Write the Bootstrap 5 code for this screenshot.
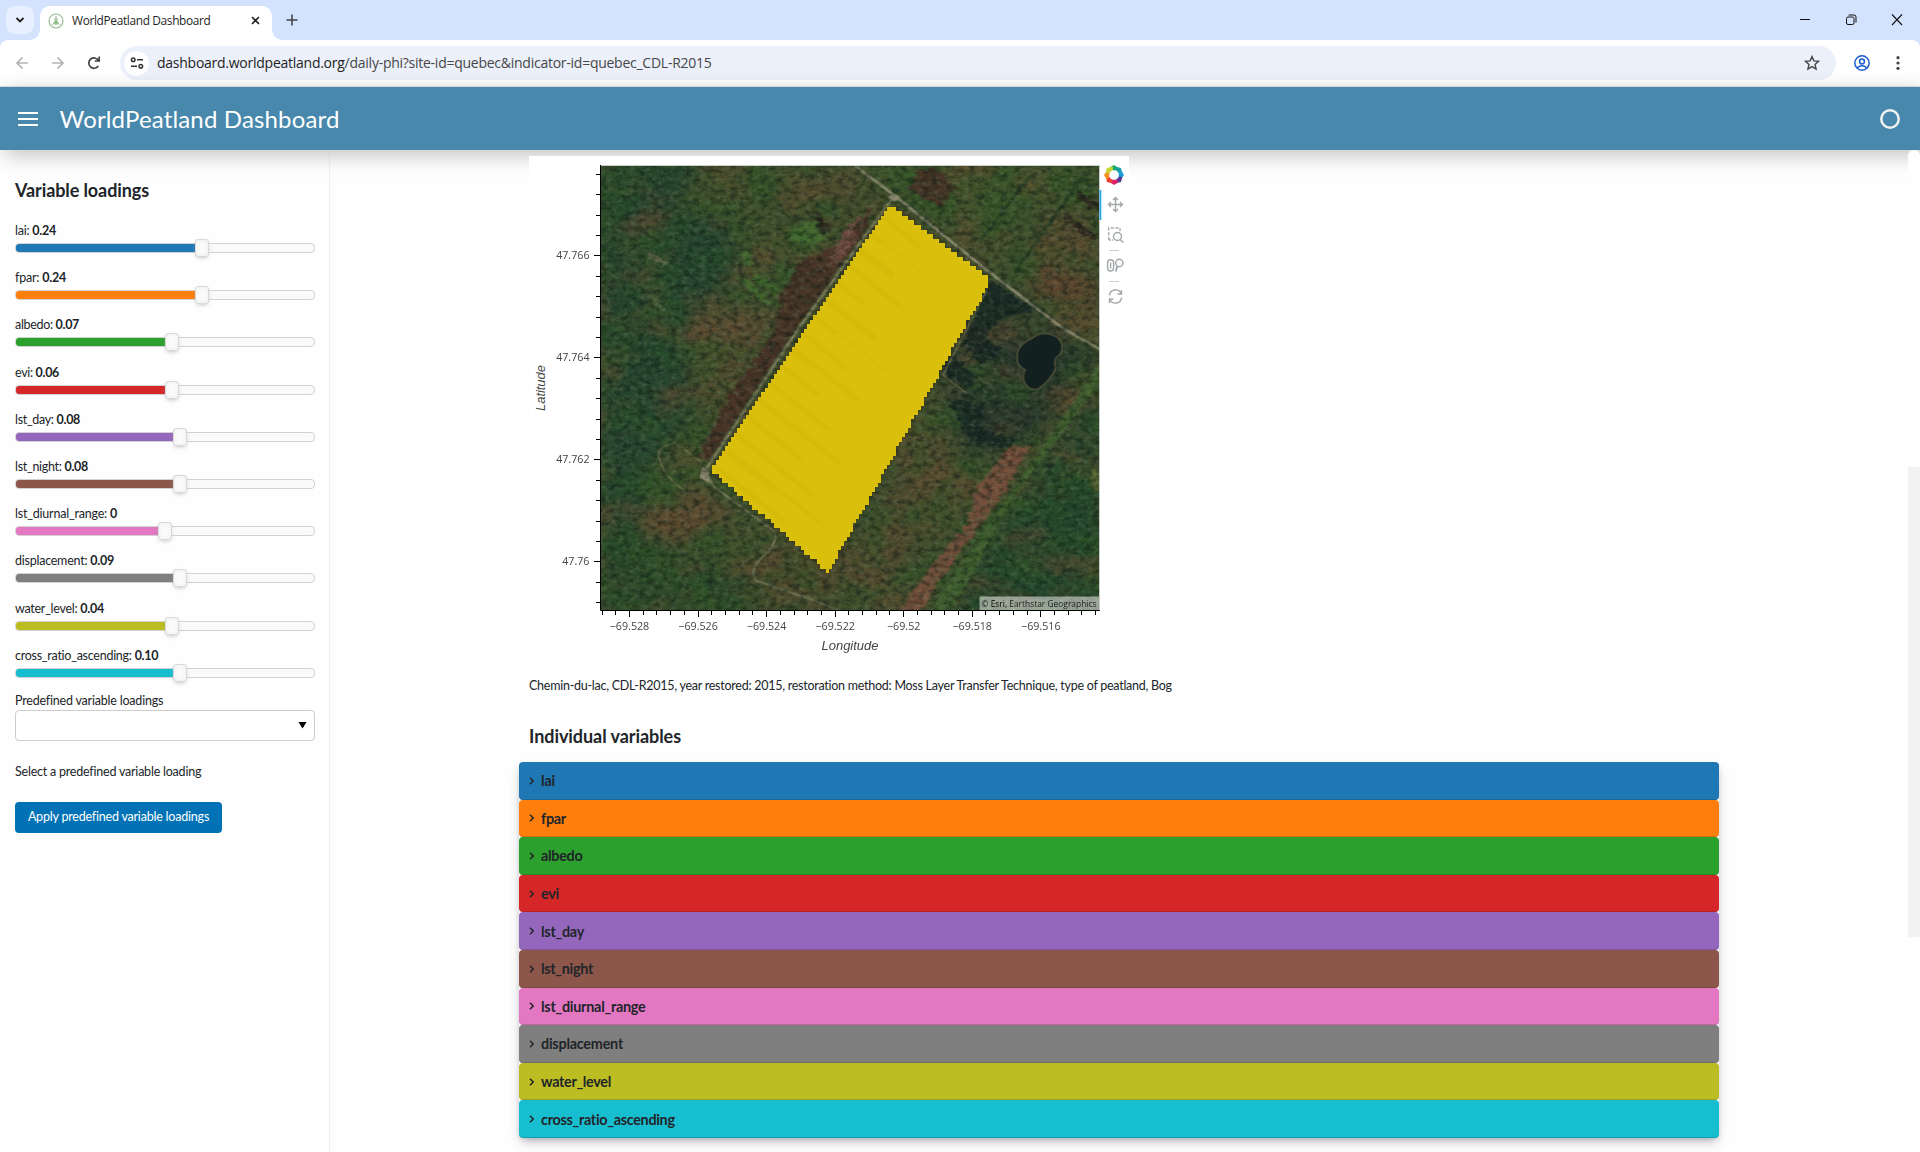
<!DOCTYPE html>
<html lang="en">
<head>
<meta charset="utf-8">
<title>WorldPeatland Dashboard</title>
<link href="https://cdn.jsdelivr.net/npm/bootstrap@5.3.0/dist/css/bootstrap.min.css" rel="stylesheet">
<style>
body{height:1152px;overflow:hidden;font-family:Lato,"Liberation Sans",sans-serif;font-size:12.5px;line-height:1.2;color:#212529;background:#fefefe}
.ui{font-family:"Open Sans","Noto Sans",sans-serif}
.tabstrip{height:40px;background:#d3e3fd}
.tabmenu{width:28px;height:28px;border-radius:9px;background:#e9f0fd;margin:6px 6px 0}
.tab{width:232px;height:34px;margin-top:6px;border-radius:10px 10px 0 0;background:#fff;padding:0 12px 5px 8px;font-size:11.9px;color:#1f1f1f;position:relative}
.tab::before,.tab::after{content:"";position:absolute;bottom:0;width:10px;height:10px}
.tab::before{left:-10px;background:radial-gradient(circle at 0 0,transparent 9.5px,#fff 10px)}
.tab::after{right:-10px;background:radial-gradient(circle at 100% 0,transparent 9.5px,#fff 10px)}
.toolbar{height:47px;background:#fff;border-bottom:1px solid #dcdfe3;padding:0 20px 0 15px}
.toolwrap{background:#d3e3fd}
.toolwrap .toolbar{border-radius:8px 8px 0 0}
.urlbar{height:34px;border-radius:17px;background:#ebf0fa;font-size:14px;color:#474747;padding:0 16px 0 4px;margin-left:15px}
.siteinfo{width:25px;height:25px;border-radius:13px;background:#fff;margin-right:8px}
.apphead{height:63px;background:#4888ac;color:#fff;padding:0 20px 0 18px;box-shadow:5px 5px 20px silver;font-size:24px;position:relative;z-index:1}
.side{width:330px;border-right:1px solid #efefef;padding:0 14px 0 15px;background:#fefefe}
.sidehead{font-size:18px;font-weight:700;height:68px;padding-top:30px;margin:0}
.loading{height:47.2px}
.loading .lbl{height:25px;padding-top:5px}
.track{width:300px;height:10px;border:1px solid #d2d2d2;border-radius:4px;background:#fafafa}
.fillbar{height:8px;border-radius:3px 0 0 3px;background:var(--c)}
.knob{width:14px;height:18px;margin:-5px 0 0 -7px;background:#fafafa;border:1px solid #d9d9d9;border-radius:3px;box-shadow:inset 0 0 4px #eee,0 2px 5px -2px #aaa;flex:none}
.pick{height:31px;width:300px;border:1px solid #ccc;border-radius:4px;background:#fff;padding-right:7px}
.applybtn{width:207px;height:31px;background:#0072b5;color:#fff;font-size:12.5px;border-radius:4px;padding:0;margin-top:22px}
.page{width:1200px;padding-top:6px;position:relative;z-index:2}
.note{height:42px}
.secthead{font-size:18px;font-weight:700;height:56px;padding-top:20px;margin:0}
.vars{box-shadow:rgba(50,50,93,.25) 0 6px 12px -2px,rgba(0,0,0,.3) 0 3px 7px -3px;border-radius:4px}
.varcard{height:37.6px;background:var(--c);border-bottom:1px solid rgba(0,0,0,.15);border-radius:4px;padding:1px 0 0 10px;font-size:14.4px;font-weight:700}
.scroller{width:12px;background:#fefefe;position:relative;z-index:2;border-radius:6px 6px 0 0;padding-top:317px}
.scroller div{height:470px;background:#f2f2f2}
svg{display:block;flex:none}
svg text{font-family:"Open Sans","Noto Sans",sans-serif}
svg text.axisname{font:italic 13px "Liberation Sans",sans-serif}
filter{color-interpolation-filters:sRGB}
</style>
<script src="https://cdn.jsdelivr.net/npm/bootstrap@5.3.0/dist/js/bootstrap.bundle.min.js"></script>
</head>
<body class="d-flex flex-column">
<div class="tabstrip ui d-flex flex-none">
  <div class="tabmenu d-flex align-items-center justify-content-center"><svg width="10" height="8" fill="none" stroke="#1f1f1f" stroke-width="1.8"><path d="M1.5 2l3.500 3.500L8.500 2"/></svg></div>
  <div class="tab d-flex align-items-center">
    <svg width="16" height="16" fill="none" stroke="#8fb98a"><circle cx="8" cy="8" r="7" stroke-width="1.100"/><path d="M8 3v9M6.500 5l3 6M9.500 5l-3 6M4.500 12l2.500-4 1 4 1-4 2.500 4" stroke-width="1"/></svg>
    <span id="tabname" class="text-nowrap" style="margin-left:8px">WorldPeatland Dashboard</span>
    <svg class="ms-auto" width="9" height="9" stroke="#1f1f1f" stroke-width="1.600"><path d="M1 1l7 7M8 1l-7 7"/></svg>
  </div>
  <svg style="margin:14px 0 0 14px" width="12" height="12" stroke="#444" stroke-width="1.600"><path d="M6 .5v11M.5 6h11"/></svg>
  <svg class="ms-auto" style="margin:14px 16px 0 0" width="104" height="12" fill="none" stroke="#111"><path d="M0 5.500h10M92 .5l10 10.500M102 .5l-10 10.500" stroke-width="1.100"/><rect x="46.500" y="3" width="7.500" height="7.500" rx="1.500"/><path d="M48.500 1h5.500q2 0 2 2v5.500"/></svg>
</div>
<div class="toolwrap ui"><div class="toolbar d-flex align-items-center">
  <svg width="90" height="16" fill="none" stroke-width="1.700"><g stroke="#b4b4b4"><path d="M13 8H2M7.500 2.500L2 8l5.500 5.500M37 8h11M42.500 2.500L48 8l-5.500 5.500"/></g><path stroke="#444" d="M83.300 11A5.200 5.200 0 1 1 83.500 5.500M84.200 1.500v4.500h-4.500"/></svg>
  <div class="urlbar d-flex align-items-center flex-grow-1">
    <div class="siteinfo d-flex align-items-center justify-content-center"><svg width="14" height="12" fill="none" stroke="#333" stroke-width="1.500"><circle cx="3.200" cy="2.800" r="1.800"/><path d="M7 2.800h6M1 9.200h6"/><circle cx="10.800" cy="9.200" r="1.800"/></svg></div>
    <span id="url" class="text-nowrap"><span style="color:#1f1f1f">dashboard.worldpeatland.org</span>/daily-phi?site-id=quebec&amp;indicator-id=quebec_CDL-R2015</span>
    <svg class="ms-auto" width="16" height="16" fill="none" stroke="#474747" stroke-width="1.400"><path d="M8 1.600l1.900 4.300 4.700.4-3.600 3.100 1.100 4.600L8 11.600 3.900 14 5 9.400 1.400 6.300l4.700-.4z"/></svg>
  </div>
  <svg style="margin-left:18px" width="16" height="16" fill="none" stroke="#1a5dd0" stroke-width="1.500"><circle cx="8" cy="8" r="7.200"/><circle cx="8" cy="6.500" r="2.400"/><path d="M3 13q5-4.500 10 0"/></svg>
  <svg style="margin-left:26px" width="4" height="14" fill="#444"><circle cx="2" cy="1.700" r="1.600"/><circle cx="2" cy="7" r="1.600"/><circle cx="2" cy="12.300" r="1.600"/></svg>
</div></div>
<header class="apphead d-flex align-items-center">
  <svg width="20" height="14" fill="#fff"><path d="M0 0h20v2H0zM0 6h20v2H0zM0 12h20v2H0z"/></svg>
  <span id="apptitle" style="margin-left:21.500px;padding-top:1px" class="text-nowrap">WorldPeatland Dashboard</span>
  <svg class="ms-auto" width="20" height="20" fill="none"><circle cx="10" cy="10" r="8.700" stroke="#f1f1f1" stroke-width="2.500"/></svg>
</header>
<div class="d-flex flex-grow-1" style="min-height:0">
  <aside class="side flex-shrink-0">
    <h2 class="sidehead"><span data-w="134">Variable loadings</span></h2>
    <div id="sliders"></div>
    <div style="height:20px;padding-top:3px"><span data-w="148">Predefined variable loadings</span></div>
    <div class="pick d-flex align-items-center justify-content-end"><svg width="9" height="7"><path d="M.5 0h8L4.500 6.500z"/></svg></div>
    <div style="margin-top:23px;height:16px"><span data-w="186">Select a predefined variable loading</span></div>
    <button class="btn applybtn d-block"><span data-w="181">Apply predefined variable loadings</span></button>
  </aside>
  <main class="flex-grow-1 d-flex justify-content-center">
    <div class="page">
      <svg id="plot" width="600" height="508" viewBox="529 156 600 508" style="margin-left:10px">
        <defs>
          <clipPath id="frame"><rect x="600" y="165" width="499.500" height="445"/></clipPath>
          <filter id="b1" x="-30%" y="-30%" width="160%" height="160%"><feGaussianBlur stdDeviation="22"/></filter>
          <filter id="rough" x="-30%" y="-30%" width="160%" height="160%"><feTurbulence type="fractalNoise" baseFrequency=".06" numOctaves="4" seed="4" result="n"/><feDisplacementMap in="SourceGraphic" in2="n" scale="30" xChannelSelector="R" yChannelSelector="G"/><feGaussianBlur stdDeviation="2.200"/></filter>
          <filter id="soft"><feGaussianBlur stdDeviation="1.300"/></filter>
          <filter id="grain" x="0" y="0" width="100%" height="100%"><feTurbulence type="fractalNoise" baseFrequency=".13 .19" numOctaves="4" seed="8"/><feColorMatrix values="0 0 0 0 .04  0 0 0 0 .09  0 0 0 0 .07  2.600 0 0 0 -1.050"/></filter>
          <filter id="grainlight" x="0" y="0" width="100%" height="100%"><feTurbulence type="fractalNoise" baseFrequency=".17 .22" numOctaves="4" seed="21"/><feColorMatrix values="0 0 0 0 .48  0 0 0 0 .55  0 0 0 0 .42  0 2.400 0 0 -1.100"/></filter>
          <filter id="patches" x="0" y="0" width="100%" height="100%"><feTurbulence type="fractalNoise" baseFrequency=".018 .026" numOctaves="5" seed="13"/><feColorMatrix values="0 0 0 0 .44  0 0 0 0 .30  0 0 0 0 .20  0 3 0 0 -1.350"/></filter>
          <filter id="greens" x="0" y="0" width="100%" height="100%"><feTurbulence type="fractalNoise" baseFrequency=".022 .03" numOctaves="5" seed="33"/><feColorMatrix values="0 0 0 0 .18  0 0 0 0 .34  0 0 0 0 .15  0 3 0 0 -1.300"/></filter>
        </defs>
        <rect x="529" y="156" width="600" height="508" fill="#fff"/>
        <g clip-path="url(#frame)">
          <rect x="600" y="165" width="500" height="445" fill="#41502d"/>
          <g transform="translate(520 145) scale(.3954 .338)">
            <g filter="url(#b1)">
              <path fill="#26472f" d="M200 50H450L400 190 520 220 560 420 420 500 430 800 330 960 280 1200 200 1400z" opacity=".95"/>
              <path fill="#25482c" d="M1470 680L1080 1390H1470z"/>
              <path fill="#2c3a2c" d="M1190 400L1470 620 1400 720 1280 900 1130 920 1060 680z"/>
              <path fill="#284a29" d="M200 1120L480 1230 760 1390H200z" opacity=".75"/>
              <path fill="#5d4c32" d="M430 490H650L600 600 520 720H450z" opacity=".85"/>
              <path fill="#584a30" d="M300 1100L420 1010 560 1090 400 1210zM1000 900L1080 830 1100 1000 900 1350 800 1280z" opacity=".7"/>
              <path fill="#63432f" d="M1290 340L1460 400V520L1300 440zM650 1190L800 1290 760 1350 600 1280z" opacity=".85"/>
              <path fill="#3a5629" d="M870 60H1440L1180 300 950 130z" opacity=".8"/>
              <path fill="#5b4a30" d="M1300 230L1400 150 1480 300 1400 370zM750 70H850L880 140 800 190z" opacity=".6"/>
            </g>
          </g>
          <rect x="600" y="165" width="500" height="445" filter="url(#patches)" opacity=".5"/>
          <rect x="600" y="165" width="500" height="445" filter="url(#greens)" opacity=".6"/>
          <g transform="translate(520 145) scale(.3954 .338)">
            <g filter="url(#rough)">
              <path fill="#4a2d26" d="M890 180L800 300 710 340 660 450 640 560 530 740 450 920 480 935 700 560 880 250zM1010 70H1060L1100 130 1060 180 980 130z" opacity=".8"/>
              <path fill="#7b5046" d="M860 210L835 310 790 365 780 340 825 240z" opacity=".8"/>
              <path fill="#44702f" d="M560 310L580 310 585 350 560 350zM545 390L570 390 640 470 625 475zM590 375L660 430 650 445 590 400zM750 220L780 270 740 300 660 270z" opacity=".75"/>
              <path fill="#7f4f3e" d="M1290 890L1230 1020 1150 1150 1060 1290 1010 1390H950L1050 1230 1130 1120 1150 1020 1240 890z" opacity=".8"/>
              <path fill="#172624" d="M1190 400L1310 490 1220 510 1180 560 1220 620 1160 650 1120 590zM1090 620L1160 690 1130 720 1070 680zM1080 750L1180 770 1160 830 1250 870 1230 900 1140 880z" opacity=".8"/>
              <path fill="#2a1f1c" d="M1410 130L1475 190V205L1400 150zM1380 200L1460 270 1450 285 1370 215zM740 180L790 250 770 270 745 220z" opacity=".75"/>
              <path fill="#5d6a34" d="M1450 950L1480 960V1040L1440 1010z"/>
              <path fill="#857b5e" d="M315 305L380 350 360 358 330 330zM310 425L370 490 360 490zM1310 980L1390 890 1350 940z" opacity=".6"/>
            </g>
            <g filter="url(#soft)" fill="none">
              <path fill="#40602e" d="M1470 640L1480 680 1360 870 1240 1050 1120 1320 1080 1390H1030L1140 1200 1330 880z" opacity=".85"/>
              <path stroke="#263f24" stroke-width="9" d="M1290 90L1160 290M1430 80L1250 380" opacity=".7"/>
              <path stroke="#85846a" stroke-width="8" d="M840 55L948 150 1180 370 1370 540 1475 610"/>
              <path stroke="#56603c" stroke-width="13" d="M943 155L700 550 470 960" opacity=".9"/>
              <path stroke="#858463" stroke-width="4" d="M943 155L700 550 470 960"/>
              <path stroke="#6c7150" stroke-width="6" d="M470 970L490 1010 640 1140Q655 1160 630 1200 570 1260 600 1290L750 1350 850 1400"/>
              <path stroke="#7e7954" stroke-width="4" d="M350 920Q360 980 425 1030M395 880Q350 890 350 920M415 900L460 940M1184 420L1070 680 1130 735" opacity=".75"/>
              <path fill="#8c876e" d="M460 950L478 965 480 1000 455 985zM948 143L965 160 945 166 930 155z"/>
            </g>
          </g>
          <rect x="600" y="165" width="500" height="445" filter="url(#grain)" opacity=".5"/>
          <rect x="600" y="165" width="500" height="445" filter="url(#grainlight)" opacity=".3"/>
          <path transform="translate(520 145) scale(.3954 .338)" filter="url(#soft)" fill="#12211f" stroke="#5d583f" stroke-opacity=".6" stroke-width="5" d="M1295 572Q1325 545 1360 570 1380 595 1365 620 1345 635 1355 660 1340 700 1310 722 1285 728 1275 700 1270 680 1278 665 1255 655 1258 625 1255 595 1295 572z"/>
          <clipPath id="siteclip"><path class="sitepath"/></clipPath>
          <path class="sitepath" fill="none" stroke="#3a3014" stroke-width="3" opacity=".3"/>
          <path class="sitepath" fill="#dabf0b" shape-rendering="crispEdges"/>
          <g clip-path="url(#siteclip)"><g id="furrows" stroke="#b99d08" opacity=".2" filter="url(#soft)"></g></g>
          <rect x="979.500" y="596.500" width="120" height="13.500" fill="#fff" opacity=".5"/>
        </g>
        <text x="981.500" y="607" font-size="9.300" textLength="115" lengthAdjust="spacingAndGlyphs" fill="#222">© <tspan fill="#000">Esri</tspan>, Earthstar Geographics</text>
        <path d="M600 165.500h499.500V610" fill="none" stroke="#c8cdc8"/>
        <path d="M600.500 165v445.500H1100" fill="none" stroke="#000"/>
        <g id="axes" fill="#444" font-size="10.700"></g>
        <text class="axisname" x="850" y="650" fill="#444" text-anchor="middle" textLength="57">Longitude</text>
        <text class="axisname" transform="translate(545 388) rotate(-90)" fill="#444" text-anchor="middle" textLength="46">Latitude</text>
        <g id="bokeh"></g>
        <rect x="1099.500" y="190" width="1.800" height="30" fill="#26aae1"/>
        <g fill="none" stroke="#a1a6a9" stroke-width="1.400">
          <path d="M1108.500 204.500h14M1115.500 197.500v14M1113 200l2.500-2.500 2.500 2.500M1113 209l2.500 2.500 2.500-2.500M1111 202l-2.500 2.500 2.500 2.500M1120 202l2.500 2.500-2.500 2.500"/>
          <path d="M1108.700 240v-12h11.300v3" stroke-dasharray="3 1.700"/><path d="M1109 240h4" stroke-dasharray="2 1"/><circle cx="1117.500" cy="236.500" r="4"/><path d="M1120.300 239.500l3 3"/>
          <path d="M1109 250.500h10M1109 281.500h10" stroke="#ccc" stroke-width="1"/>
          <rect x="1107.600" y="259.700" width="6" height="11.300" rx="3"/><path d="M1110.600 262.500v6"/><circle cx="1119.300" cy="263" r="3.700"/><path d="M1117.300 266l-1.500 5.500" stroke-width="1.800"/>
          <path d="M1109.500 295.500a6 6 0 0 1 11.500-2M1121.500 297.500a6 6 0 0 1-11.500 2M1121.500 290v4h-4M1109.500 303v-4h4"/>
        </g>
      </svg>
      <div class="note d-flex align-items-center" style="padding-left:10px"><span data-w="643">Chemin-du-lac, CDL-R2015, year restored: 2015, restoration method: Moss Layer Transfer Technique, type of peatland, Bog</span></div>
      <h2 class="secthead" style="padding-left:10px"><span data-w="152">Individual variables</span></h2>
      <div id="vars" class="vars"></div>
    </div>
  </main>
  <div class="scroller flex-shrink-0"><div></div></div>
</div>
<script>
// name, value, series colour, knob centre in px from the track's left edge, label width, card title width
const series=[
 ['lai','0.24','#1f77b4',187,41,14],['fpar','0.24','#ff7f0e',187,51,25],['albedo','0.07','#2ca02c',157,64,41.500],
 ['evi','0.06','#d62728',157,44,18],['lst_day','0.08','#9467bd',165,65,43],['lst_night','0.08','#8c564b',165,73,52],
 ['lst_diurnal_range','0','#e377c2',150,102,104.500],['displacement','0.09','#7f7f7f',165,99,82],
 ['water_level','0.04','#bcbd22',157,89,70],['cross_ratio_ascending','0.10','#17becf',165,143.500,134]];
document.getElementById('sliders').innerHTML=series.map(s=>`<div class="loading" style="--c:${s[2]}"><div class="lbl"><span data-w="${s[4]}">${s[0]}: <b>${s[1]}</b></span></div><div class="track d-flex"><div class="fillbar" style="width:${s[3]-1}px"></div><div class="knob"></div></div></div>`).join('');
document.getElementById('vars').innerHTML=series.map(s=>`<div class="varcard d-flex align-items-center" style="--c:${s[2]}"><svg width="6" height="8" fill="none" stroke="#212529" stroke-width="1.500" style="margin-right:6px"><path d="M1 .8L4.200 4 1 7.200"/></svg><span data-w="${s[5]}">${s[0]}</span></div>`).join('');
document.getElementById('tabname').dataset.w=138.5;
document.getElementById('url').dataset.w=554.5;
document.getElementById('apptitle').dataset.w=280;
document.querySelectorAll('[data-w]').forEach(e=>{const w=e.getBoundingClientRect().width,n=e.textContent.length;e.style.letterSpacing=((+e.dataset.w-w)/n)+'px'});

// restored site as a raster footprint, one run of cells per row
const cw=3.06,ch=4.52,x0=886.9,y0=206.9,rows=81;
const left=i=>i<=57?-i:i<=58?-57:Math.round(-57+(i-58)*37/22);
const right=i=>i<=15?3+2*i:i<=17?33:Math.round(33-(i-17)*51/62);
let d='';
for(let i=0;i<rows;i++)d+=(i?'L':'M')+(x0+left(i)*cw)+' '+(y0+i*ch)+'v'+ch;
for(let i=rows-1;i>=0;i--)d+='L'+(x0+right(i)*cw)+' '+(y0+(i+1)*ch)+'v'+-ch;
document.querySelectorAll('.sitepath').forEach(p=>p.setAttribute('d',d+'z'));
let f='';
for(let i=0;i<50;i++){const y=195+i*8,x=865-i*3.6;f+=`<path d="M${x-45+i*17%40} ${y-25}l${50+i*37%50} ${40+(i*37%50)*.8}" stroke-width="${1+i%2}"/>`}
document.getElementById('furrows').innerHTML=f;
let a='',t='';
['47.766','47.764','47.762','47.76'].forEach((s,i)=>t+=`<text x="589.500" y="${259.3+i*102}" text-anchor="end">${s}</text>`);
for(let k=-4;k<=17;k++){const y=Math.round(255.4+k*20.4)+.5;if(y<609)a+=`M600 ${y}h${k%5?-4:-6}`}
['528','526','524','522','52','518','516'].forEach((s,i)=>t+=`<text x="${629.5+i*68.55}" y="629.700" text-anchor="middle">−69.${s}</text>`);
for(let k=-2;k<=34;k++){const x=Math.round(629+k*13.71)+.5;if(x<1099)a+=`M${x} 611v${k%5?4:6}`}
document.getElementById('axes').innerHTML=`<path d="${a}" stroke="#000" fill="none"/>`+t;
const hues=['#17a768','#1a9fa8','#1c9ad6','#5b3a92','#e0206a','#ee4035','#f68b1f','#c4d52e'];
document.getElementById('bokeh').innerHTML=hues.map((c,i)=>`<path transform="translate(1114 175) rotate(${i*45})" fill="${c}" d="M-4.200-7.500L0-10 5-6.500 2.800-4.500-3-5z"/>`).join('');
</script>
</body>
</html>
